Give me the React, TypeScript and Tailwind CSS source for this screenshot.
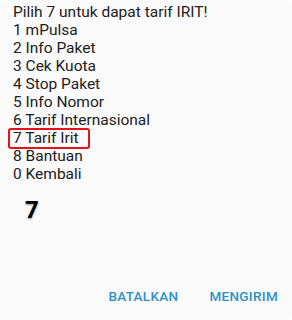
import React from "react";

export default function App() {
  const lines = [
    "Pilih 7 untuk dapat tarif IRIT!",
    "1 mPulsa",
    "2 Info Paket",
    "3 Cek Kuota",
    "4 Stop Paket",
    "5 Info Nomor",
    "6 Tarif Internasional",
  ];
  const after = ["8 Bantuan", "0 Kembali"];
  return (
    <div className="w-[292px] h-[320px] bg-white" style={{ fontFamily: "Roboto, 'Noto Sans', sans-serif" }}>
      <div className="w-full h-full bg-[#fafafa] rounded-[6px] flex flex-col">
        <div className="pl-[13px] pt-[3px] text-[15.5px] leading-[18px] text-[#212121]">
          {lines.map((l) => (
            <div key={l}>{l}</div>
          ))}
          <div className="relative">
            7 Tarif Irit
            <div className="absolute left-[-5px] top-[-1px] w-[82px] h-[21px] border-2 border-[#e3131b] rounded-[3px]" />
          </div>
          {after.map((l) => (
            <div key={l}>{l}</div>
          ))}
        </div>
        <div className="pl-[25px] mt-[13px] text-[24px] leading-[28px] font-bold text-black [text-shadow:0_1px_2px_rgba(0,0,0,0.45)]">
          7
        </div>
        <div className="flex-1" />
        <div className="flex justify-end gap-[31px] pr-[14px] pb-[14px] text-[13.5px] font-medium text-[#2b93c4] tracking-[0.3px]">
          <span>BATALKAN</span>
          <span>MENGIRIM</span>
        </div>
      </div>
    </div>
  );
}
